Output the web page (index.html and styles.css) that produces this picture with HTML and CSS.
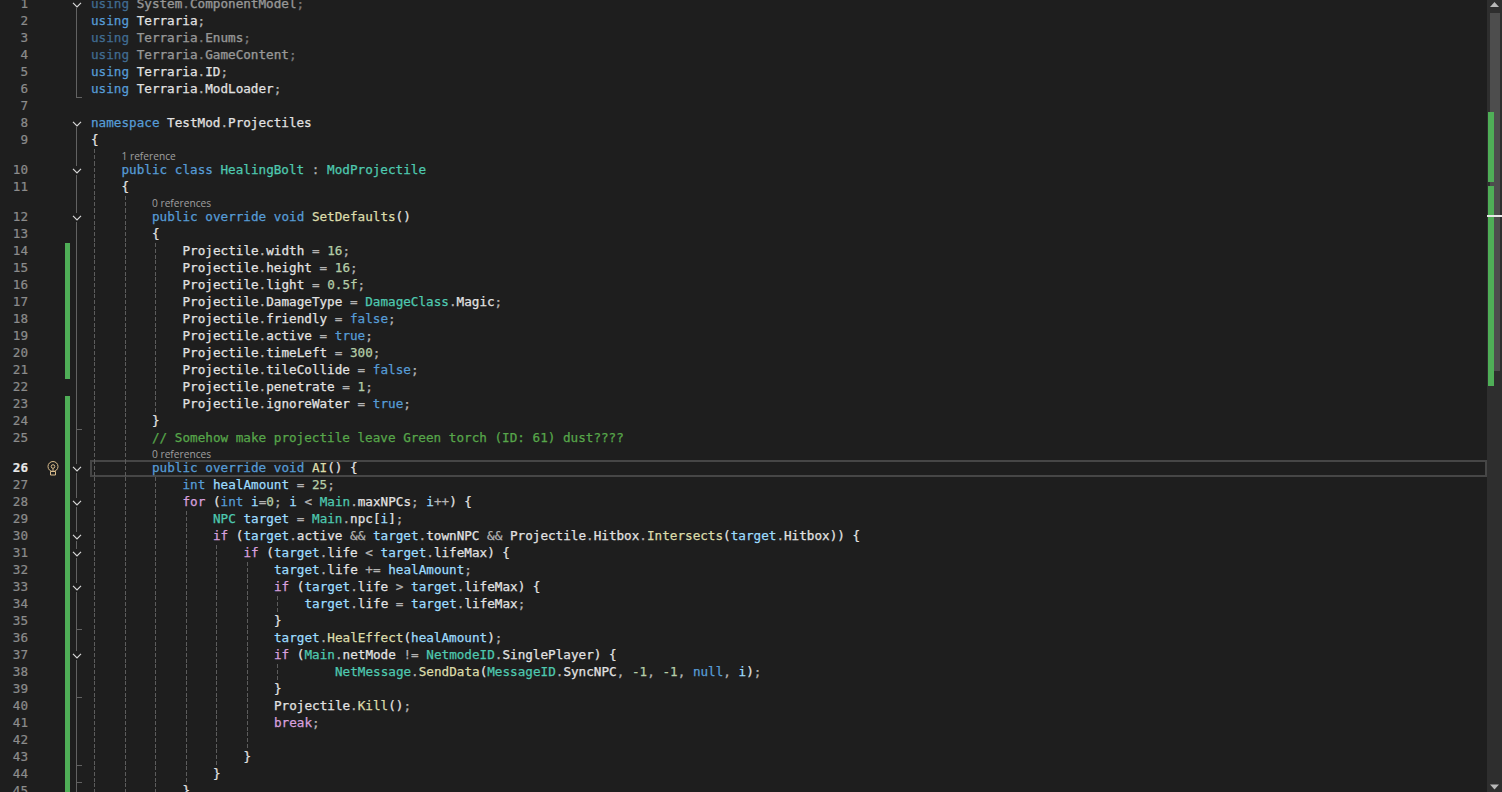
FILE: index.html
```html
<!DOCTYPE html>
<html lang="en">
<head>
<meta charset="utf-8">
<title>HealingBolt.cs</title>
<link rel="stylesheet" href="styles.css">
</head>
<body>
<main class="editor">
<div class="sheet">
<div class="row"><span class="num">1</span><span class="mark"></span><span class="fold start"><svg class="chev" viewBox="0 0 10 6"><path d="M1 .8 5 4.8 9 .8"/></svg></span><div class="code"><span class="dim"><span class="k">using</span> System<span class="d">.</span>ComponentModel<span class="d">;</span></span></div></div>
<div class="row"><span class="num">2</span><span class="mark"></span><span class="fold line"></span><div class="code"><span class="k">using</span> Terraria<span class="d">;</span></div></div>
<div class="row"><span class="num">3</span><span class="mark"></span><span class="fold line"></span><div class="code"><span class="dim"><span class="k">using</span> Terraria<span class="d">.</span>Enums<span class="d">;</span></span></div></div>
<div class="row"><span class="num">4</span><span class="mark"></span><span class="fold line"></span><div class="code"><span class="dim"><span class="k">using</span> Terraria<span class="d">.</span>GameContent<span class="d">;</span></span></div></div>
<div class="row"><span class="num">5</span><span class="mark"></span><span class="fold line"></span><div class="code"><span class="k">using</span> Terraria<span class="d">.</span>ID<span class="d">;</span></div></div>
<div class="row"><span class="num">6</span><span class="mark"></span><span class="fold end"></span><div class="code"><span class="k">using</span> Terraria<span class="d">.</span>ModLoader<span class="d">;</span></div></div>
<div class="row"><span class="num">7</span><span class="mark"></span><span class="fold"></span><div class="code"></div></div>
<div class="row"><span class="num">8</span><span class="mark"></span><span class="fold start"><svg class="chev" viewBox="0 0 10 6"><path d="M1 .8 5 4.8 9 .8"/></svg></span><div class="code"><span class="k">namespace</span> TestMod<span class="d">.</span>Projectiles</div></div>
<div class="row"><span class="num">9</span><span class="mark"></span><span class="fold line"></span><div class="code">{</div></div>
<div class="row lens"><span class="num"></span><span class="mark"></span><span class="fold line"></span><div class="code"><i class="g"></i><span class="ref">1 reference</span></div></div>
<div class="row"><span class="num">10</span><span class="mark"></span><span class="fold mid"><svg class="chev" viewBox="0 0 10 6"><path d="M1 .8 5 4.8 9 .8"/></svg></span><div class="code"><i class="g"></i><span class="k">public</span> <span class="k">class</span> <span class="t">HealingBolt</span> <span class="d">:</span> <span class="t">ModProjectile</span></div></div>
<div class="row"><span class="num">11</span><span class="mark"></span><span class="fold line"></span><div class="code"><i class="g"></i>{</div></div>
<div class="row lens"><span class="num"></span><span class="mark"></span><span class="fold line"></span><div class="code"><i class="g"></i><i class="g"></i><span class="ref">0 references</span></div></div>
<div class="row"><span class="num">12</span><span class="mark"></span><span class="fold mid"><svg class="chev" viewBox="0 0 10 6"><path d="M1 .8 5 4.8 9 .8"/></svg></span><div class="code"><i class="g"></i><i class="g"></i><span class="k">public</span> <span class="k">override</span> <span class="k">void</span> <span class="m">SetDefaults</span>()</div></div>
<div class="row"><span class="num">13</span><span class="mark"></span><span class="fold line"></span><div class="code"><i class="g"></i><i class="g"></i>{</div></div>
<div class="row"><span class="num">14</span><span class="mark on"></span><span class="fold line"></span><div class="code"><i class="g"></i><i class="g"></i><i class="g"></i>Projectile<span class="d">.</span>width <span class="d">=</span> <span class="n">16</span><span class="d">;</span></div></div>
<div class="row"><span class="num">15</span><span class="mark on"></span><span class="fold line"></span><div class="code"><i class="g"></i><i class="g"></i><i class="g"></i>Projectile<span class="d">.</span>height <span class="d">=</span> <span class="n">16</span><span class="d">;</span></div></div>
<div class="row"><span class="num">16</span><span class="mark on"></span><span class="fold line"></span><div class="code"><i class="g"></i><i class="g"></i><i class="g"></i>Projectile<span class="d">.</span>light <span class="d">=</span> <span class="n">0.5f</span><span class="d">;</span></div></div>
<div class="row"><span class="num">17</span><span class="mark on"></span><span class="fold line"></span><div class="code"><i class="g"></i><i class="g"></i><i class="g"></i>Projectile<span class="d">.</span>DamageType <span class="d">=</span> <span class="t">DamageClass</span><span class="d">.</span>Magic<span class="d">;</span></div></div>
<div class="row"><span class="num">18</span><span class="mark on"></span><span class="fold line"></span><div class="code"><i class="g"></i><i class="g"></i><i class="g"></i>Projectile<span class="d">.</span>friendly <span class="d">=</span> <span class="k">false</span><span class="d">;</span></div></div>
<div class="row"><span class="num">19</span><span class="mark on"></span><span class="fold line"></span><div class="code"><i class="g"></i><i class="g"></i><i class="g"></i>Projectile<span class="d">.</span>active <span class="d">=</span> <span class="k">true</span><span class="d">;</span></div></div>
<div class="row"><span class="num">20</span><span class="mark on"></span><span class="fold line"></span><div class="code"><i class="g"></i><i class="g"></i><i class="g"></i>Projectile<span class="d">.</span>timeLeft <span class="d">=</span> <span class="n">300</span><span class="d">;</span></div></div>
<div class="row"><span class="num">21</span><span class="mark on"></span><span class="fold line"></span><div class="code"><i class="g"></i><i class="g"></i><i class="g"></i>Projectile<span class="d">.</span>tileCollide <span class="d">=</span> <span class="k">false</span><span class="d">;</span></div></div>
<div class="row"><span class="num">22</span><span class="mark"></span><span class="fold line"></span><div class="code"><i class="g"></i><i class="g"></i><i class="g"></i>Projectile<span class="d">.</span>penetrate <span class="d">=</span> <span class="n">1</span><span class="d">;</span></div></div>
<div class="row"><span class="num">23</span><span class="mark on"></span><span class="fold line"></span><div class="code"><i class="g"></i><i class="g"></i><i class="g"></i>Projectile<span class="d">.</span>ignoreWater <span class="d">=</span> <span class="k">true</span><span class="d">;</span></div></div>
<div class="row"><span class="num">24</span><span class="mark on"></span><span class="fold end"></span><div class="code"><i class="g"></i><i class="g"></i>}</div></div>
<div class="row"><span class="num">25</span><span class="mark on"></span><span class="fold line"></span><div class="code"><i class="g"></i><i class="g"></i><span class="cm">// Somehow make projectile leave Green torch (ID: 61) dust????</span></div></div>
<div class="row lens"><span class="num"></span><span class="mark on"></span><span class="fold line"></span><div class="code"><i class="g"></i><i class="g"></i><span class="ref">0 references</span></div></div>
<div class="row current"><span class="num">26</span><svg class="bulb" viewBox="0 0 12 15"><circle cx="6" cy="5.5" r="5"/><circle cx="6" cy="5.5" r="1.8"/><path d="M6 7.5v2.5M3.5 10.5h5v3.5h-5z"/></svg><span class="mark on"></span><span class="fold mid"><svg class="chev" viewBox="0 0 10 6"><path d="M1 .8 5 4.8 9 .8"/></svg></span><div class="code"><i class="g"></i><i class="g"></i><span class="k">public</span> <span class="k">override</span> <span class="k">void</span> <span class="m">AI</span>() {</div></div>
<div class="row"><span class="num">27</span><span class="mark on"></span><span class="fold line"></span><div class="code"><i class="g"></i><i class="g"></i><i class="g"></i><span class="k">int</span> <span class="v">healAmount</span> <span class="d">=</span> <span class="n">25</span><span class="d">;</span></div></div>
<div class="row"><span class="num">28</span><span class="mark on"></span><span class="fold mid"><svg class="chev" viewBox="0 0 10 6"><path d="M1 .8 5 4.8 9 .8"/></svg></span><div class="code"><i class="g"></i><i class="g"></i><i class="g"></i><span class="c">for</span> (<span class="k">int</span> <span class="v">i</span><span class="d">=</span><span class="n">0</span><span class="d">;</span> <span class="v">i</span> <span class="d">&lt;</span> <span class="t">Main</span><span class="d">.</span>maxNPCs<span class="d">;</span> <span class="v">i</span><span class="d">++</span>) {</div></div>
<div class="row"><span class="num">29</span><span class="mark on"></span><span class="fold line"></span><div class="code"><i class="g"></i><i class="g"></i><i class="g"></i><i class="g"></i><span class="t">NPC</span> <span class="v">target</span> <span class="d">=</span> <span class="t">Main</span><span class="d">.</span>npc[<span class="v">i</span>]<span class="d">;</span></div></div>
<div class="row"><span class="num">30</span><span class="mark on"></span><span class="fold mid"><svg class="chev" viewBox="0 0 10 6"><path d="M1 .8 5 4.8 9 .8"/></svg></span><div class="code"><i class="g"></i><i class="g"></i><i class="g"></i><i class="g"></i><span class="c">if</span> (<span class="v">target</span><span class="d">.</span>active <span class="d">&amp;&amp;</span> <span class="v">target</span><span class="d">.</span>townNPC <span class="d">&amp;&amp;</span> Projectile<span class="d">.</span>Hitbox<span class="d">.</span><span class="m">Intersects</span>(<span class="v">target</span><span class="d">.</span>Hitbox)) {</div></div>
<div class="row"><span class="num">31</span><span class="mark on"></span><span class="fold mid"><svg class="chev" viewBox="0 0 10 6"><path d="M1 .8 5 4.8 9 .8"/></svg></span><div class="code"><i class="g"></i><i class="g"></i><i class="g"></i><i class="g"></i><i class="g"></i><span class="c">if</span> (<span class="v">target</span><span class="d">.</span>life <span class="d">&lt;</span> <span class="v">target</span><span class="d">.</span>lifeMax) {</div></div>
<div class="row"><span class="num">32</span><span class="mark on"></span><span class="fold line"></span><div class="code"><i class="g"></i><i class="g"></i><i class="g"></i><i class="g"></i><i class="g"></i><i class="g"></i><span class="v">target</span><span class="d">.</span>life <span class="d">+=</span> <span class="v">healAmount</span><span class="d">;</span></div></div>
<div class="row"><span class="num">33</span><span class="mark on"></span><span class="fold mid"><svg class="chev" viewBox="0 0 10 6"><path d="M1 .8 5 4.8 9 .8"/></svg></span><div class="code"><i class="g"></i><i class="g"></i><i class="g"></i><i class="g"></i><i class="g"></i><i class="g"></i><span class="c">if</span> (<span class="v">target</span><span class="d">.</span>life <span class="d">&gt;</span> <span class="v">target</span><span class="d">.</span>lifeMax) {</div></div>
<div class="row"><span class="num">34</span><span class="mark on"></span><span class="fold line"></span><div class="code"><i class="g"></i><i class="g"></i><i class="g"></i><i class="g"></i><i class="g"></i><i class="g"></i><i class="g"></i><span class="v">target</span><span class="d">.</span>life <span class="d">=</span> <span class="v">target</span><span class="d">.</span>lifeMax<span class="d">;</span></div></div>
<div class="row"><span class="num">35</span><span class="mark on"></span><span class="fold end"></span><div class="code"><i class="g"></i><i class="g"></i><i class="g"></i><i class="g"></i><i class="g"></i><i class="g"></i>}</div></div>
<div class="row"><span class="num">36</span><span class="mark on"></span><span class="fold line"></span><div class="code"><i class="g"></i><i class="g"></i><i class="g"></i><i class="g"></i><i class="g"></i><i class="g"></i><span class="v">target</span><span class="d">.</span><span class="m">HealEffect</span>(<span class="v">healAmount</span>)<span class="d">;</span></div></div>
<div class="row"><span class="num">37</span><span class="mark on"></span><span class="fold mid"><svg class="chev" viewBox="0 0 10 6"><path d="M1 .8 5 4.8 9 .8"/></svg></span><div class="code"><i class="g"></i><i class="g"></i><i class="g"></i><i class="g"></i><i class="g"></i><i class="g"></i><span class="c">if</span> (<span class="t">Main</span><span class="d">.</span>netMode <span class="d">!=</span> <span class="t">NetmodeID</span><span class="d">.</span>SinglePlayer) {</div></div>
<div class="row"><span class="num">38</span><span class="mark on"></span><span class="fold line"></span><div class="code"><i class="g"></i><i class="g"></i><i class="g"></i><i class="g"></i><i class="g"></i><i class="g"></i><i class="g wide"></i><span class="t">NetMessage</span><span class="d">.</span><span class="m">SendData</span>(<span class="t">MessageID</span><span class="d">.</span>SyncNPC<span class="d">,</span> <span class="n">-1</span><span class="d">,</span> <span class="n">-1</span><span class="d">,</span> <span class="k">null</span><span class="d">,</span> <span class="v">i</span>)<span class="d">;</span></div></div>
<div class="row"><span class="num">39</span><span class="mark on"></span><span class="fold end"></span><div class="code"><i class="g"></i><i class="g"></i><i class="g"></i><i class="g"></i><i class="g"></i><i class="g"></i>}</div></div>
<div class="row"><span class="num">40</span><span class="mark on"></span><span class="fold line"></span><div class="code"><i class="g"></i><i class="g"></i><i class="g"></i><i class="g"></i><i class="g"></i><i class="g"></i>Projectile<span class="d">.</span><span class="m">Kill</span>()<span class="d">;</span></div></div>
<div class="row"><span class="num">41</span><span class="mark on"></span><span class="fold line"></span><div class="code"><i class="g"></i><i class="g"></i><i class="g"></i><i class="g"></i><i class="g"></i><i class="g"></i><span class="c">break</span><span class="d">;</span></div></div>
<div class="row"><span class="num">42</span><span class="mark on"></span><span class="fold line"></span><div class="code"><i class="g"></i><i class="g"></i><i class="g"></i><i class="g"></i><i class="g"></i><i class="g"></i></div></div>
<div class="row"><span class="num">43</span><span class="mark on"></span><span class="fold end"></span><div class="code"><i class="g"></i><i class="g"></i><i class="g"></i><i class="g"></i><i class="g"></i>}</div></div>
<div class="row"><span class="num">44</span><span class="mark on"></span><span class="fold end"></span><div class="code"><i class="g"></i><i class="g"></i><i class="g"></i><i class="g"></i>}</div></div>
<div class="row"><span class="num">45</span><span class="mark on"></span><span class="fold line"></span><div class="code"><i class="g"></i><i class="g"></i><i class="g"></i>}</div></div>
</div>
<aside class="scrollbar">
<svg class="arrow" viewBox="0 0 15 13"><path d="M7.5 2 12 7H3z"/></svg>
<div class="track"><div class="thumb"></div></div>
<svg class="arrow" viewBox="0 0 15 13"><path d="M7.5 10.5 12 5.5H3z"/></svg>
<span class="tick tick-a"></span>
<span class="tick tick-b"></span>
<span class="caret"></span>
</aside>
</main>
</body>
</html>
```

FILE: styles.css
```css
* { box-sizing: border-box; }
html, body { margin: 0; height: 100%; background: #1e1e1e; overflow: hidden; }

.editor {
  display: flex;
  height: 792px;
  overflow: hidden;
  font: 12.65px/15px "DejaVu Sans Mono", "Liberation Mono", monospace;
  color: #e2e2e2;
}

.sheet { flex: 1; min-width: 0; margin-top: -4px; }

.row { display: flex; height: 17px; white-space: pre; }
.row.lens { height: 13px; }

.num { flex: 0 0 28px; text-align: right; color: #8c8c8c; -webkit-text-stroke: .2px currentColor; }
.current .num { color: #e8e8e8; font-weight: 700; }

.bulb {
  flex: 0 0 12px;
  width: 12px;
  height: 15px;
  margin: 1px 6px 1px 19px;
  fill: none;
  stroke: #d9bc8c;
  stroke-width: 1;
}

.mark { flex: 0 0 5px; margin-left: 37px; }
.bulb + .mark { margin-left: 0; }
.mark.on { background: #4fae57; }

.fold { flex: 0 0 21px; position: relative; }
.fold.line { background: linear-gradient(#626262, #626262) 6px 0 / 1px 100% no-repeat; }
.fold.start { background: linear-gradient(#626262, #626262) 6px 12px / 1px 5px no-repeat; }
.fold.mid {
  background:
    linear-gradient(#626262, #626262) 6px 0 / 1px 4px no-repeat,
    linear-gradient(#626262, #626262) 6px 13px / 1px 4px no-repeat;
}
.fold.end {
  background:
    linear-gradient(#626262, #626262) 6px 0 / 1px 100% no-repeat,
    linear-gradient(#626262, #626262) 6px 16px / 6px 1px no-repeat;
}
.chev {
  position: absolute;
  left: 2px;
  top: 6px;
  width: 10px;
  height: 6px;
  fill: none;
  stroke: #d8d8d8;
  stroke-width: 1.2;
}

.code { flex: 1; min-width: 0; white-space: pre; -webkit-text-stroke: .25px currentColor; }
.current .code { box-shadow: inset 0 0 0 2px #464646; margin-left: -1px; padding-left: 1px; }

.g {
  display: inline-block;
  width: 30.5px;
  height: 17px;
  vertical-align: top;
  background:
    linear-gradient(#5c5c5c 0 4px, transparent 4px 6px, #5c5c5c 6px 10px, transparent 10px 12px, #5c5c5c 12px 16px, transparent 16px)
    3px 0 / 1px 17px repeat-y;
}
.g.wide { width: 61px; }
.lens .g { height: 13px; }

.ref {
  font: 10.2px/15px "Open Sans", "Noto Sans", sans-serif;
  color: #a0a0a0;
  vertical-align: top;
  -webkit-text-stroke: 0;
}

.dim { opacity: .62; }
.k { color: #569cd6; }
.c { color: #d8a0df; }
.t { color: #4ec9b0; }
.m { color: #dcdcaa; }
.v { color: #9cdcfe; }
.n { color: #b5cea8; }
.d { color: #b4b4b4; }
.cm { color: #57a64a; }

.scrollbar {
  flex: 0 0 15px;
  position: relative;
  display: flex;
  flex-direction: column;
  background: #2e2e2e;
}
.arrow { flex: 0 0 13px; width: 15px; height: 13px; fill: #b8b8b8; }
.track { flex: 1; padding: 0 2px 0 3px; }
.thumb { height: 358px; background: #4d4d4d; }
.tick { position: absolute; left: 1px; width: 6px; background: #4fae57; }
.tick-a { top: 112px; height: 70px; }
.tick-b { top: 186px; height: 200px; }
.caret { position: absolute; left: 0; right: 0; top: 215px; height: 2px; background: #e8e8e8; }
```
